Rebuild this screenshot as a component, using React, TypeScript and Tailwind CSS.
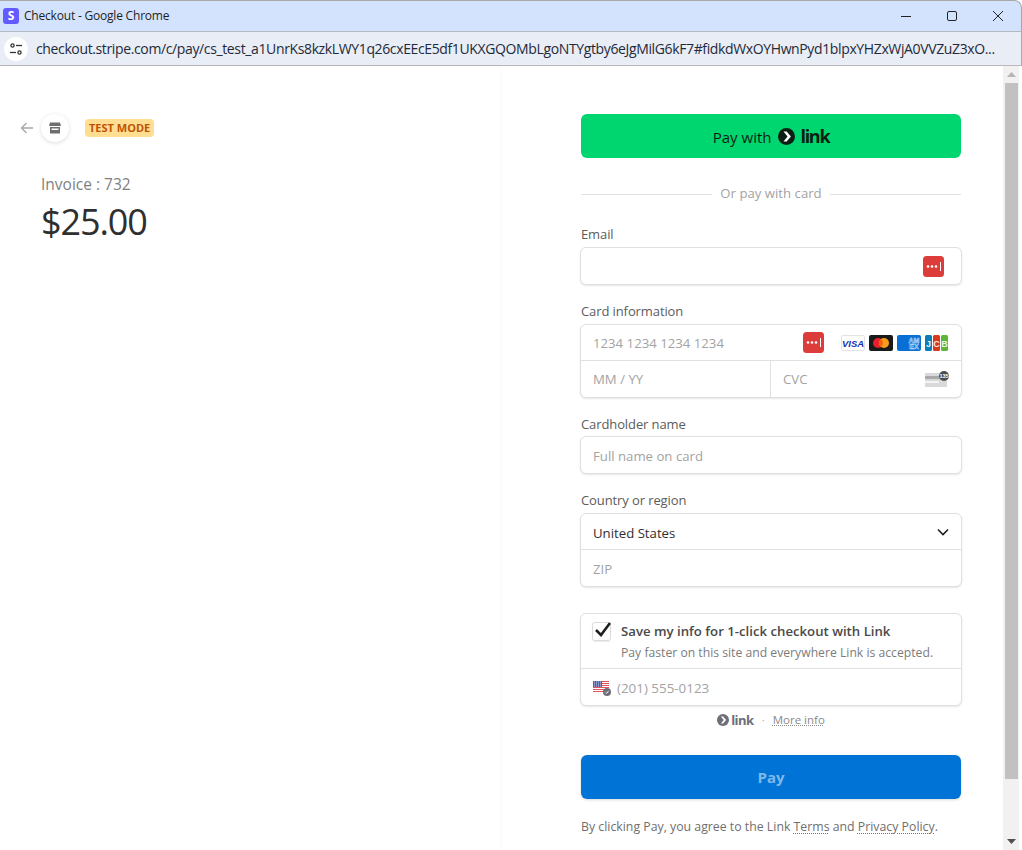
import React from "react";

const sans = { fontFamily: '"Open Sans", "Noto Sans", sans-serif' };

function LinkMark({ size, bg, fg }: { size: number; bg: string; fg: string }) {
  return (
    <svg width={size} height={size} viewBox="0 0 20 20" className="shrink-0">
      <circle cx="10" cy="10" r="10" fill={bg} />
      <path d="M6.500 4.200 L10.200 4.200 L15.200 10 L10.200 15.800 L6.500 15.800 L11.200 10 Z" fill={fg} />
    </svg>
  );
}

function DotsIcon() {
  return (
    <svg width="21" height="21" viewBox="0 0 21 21" className="shrink-0">
      <rect width="21" height="21" rx="3.5" fill="#dc3d3a" />
      <circle cx="5" cy="10.5" r="1.3" fill="#fff" />
      <circle cx="9" cy="10.5" r="1.3" fill="#fff" />
      <circle cx="13" cy="10.5" r="1.3" fill="#fff" />
      <rect x="17" y="6" width="1" height="9" fill="#fff" />
    </svg>
  );
}

function Visa() {
  return (
    <svg width="24" height="16" viewBox="0 0 24 16" className="shrink-0">
      <rect x="0.5" y="0.5" width="23" height="15" rx="1.5" fill="#fff" stroke="#e3e3e3" />
      <text x="12" y="11.500" textAnchor="middle" fontSize="9.500" fontWeight="800" fontStyle="italic" fill="#1a2fb0" fontFamily="Liberation Sans, sans-serif">VISA</text>
    </svg>
  );
}

function Master() {
  return (
    <svg width="24" height="16" viewBox="0 0 24 16" className="shrink-0">
      <rect width="24" height="16" rx="2" fill="#1a1a1a" />
      <circle cx="9" cy="8" r="5" fill="#e8202a" />
      <circle cx="15" cy="8" r="5" fill="#f79e1b" />
      <path d="M12 4 A5 5 0 0 1 12 12 A5 5 0 0 1 12 4Z" fill="#f5620f" />
    </svg>
  );
}

function Amex() {
  return (
    <svg width="24" height="16" viewBox="0 0 24 16" className="shrink-0">
      <rect width="24" height="16" rx="2" fill="#0a6fd4" />
      <text x="17" y="7.500" textAnchor="middle" fontSize="7" fontWeight="700" fill="#0a6fd4" stroke="#d8e9fb" strokeWidth="0.45" fontFamily="Liberation Sans, sans-serif">AM</text>
      <text x="17" y="14" textAnchor="middle" fontSize="7" fontWeight="700" fill="#0a6fd4" stroke="#d8e9fb" strokeWidth="0.45" fontFamily="Liberation Sans, sans-serif">EX</text>
    </svg>
  );
}

function Jcb() {
  return (
    <svg width="23" height="16" viewBox="0 0 23 16" className="shrink-0">
      <rect x="0" width="7" height="16" rx="1.500" fill="#0b7cb5" />
      <rect x="8" width="7" height="16" rx="1.500" fill="#d83a1e" />
      <rect x="16" width="7" height="16" rx="1.500" fill="#5fb43c" />
      <text x="3.500" y="11.500" textAnchor="middle" fontSize="9" fontWeight="700" fill="#e6f2f8" fontFamily="Liberation Sans, sans-serif">J</text>
      <text x="11.500" y="11.500" textAnchor="middle" fontSize="9" fontWeight="700" fill="#f8e6e0" fontFamily="Liberation Sans, sans-serif">C</text>
      <text x="19.500" y="11.500" textAnchor="middle" fontSize="9" fontWeight="700" fill="#e8f5e2" fontFamily="Liberation Sans, sans-serif">B</text>
    </svg>
  );
}

function CvcIcon() {
  return (
    <svg width="24" height="16" viewBox="0 0 24 16" className="shrink-0">
      <rect x="0" y="2" width="22" height="14" rx="1" fill="#d9d9d9" />
      <rect x="0" y="5" width="22" height="3" fill="#a9a9a9" />
      <rect x="0" y="10" width="14" height="2" fill="#f4f4f4" />
      <circle cx="19" cy="5" r="5" fill="#4d4d4d" />
      <text x="19" y="7" textAnchor="middle" fontSize="5.500" fontWeight="700" fill="#fff" fontFamily="Liberation Sans, sans-serif">135</text>
    </svg>
  );
}

function Flag() {
  return (
    <div className="relative w-[17px] h-[13px] shrink-0">
      <svg width="16" height="11" viewBox="0 0 16 11">
        <rect width="16" height="11" fill="#fff" />
        {[0, 2, 4, 6, 8, 10].map((y) => (
          <rect key={y} y={y} width="16" height="1" fill="#e0535a" />
        ))}
        <rect width="9" height="6" fill="#4f5ea8" />
        {[1, 3, 5, 7].map((x) =>
          [1, 3, 5].map((y) => <rect key={`${x}-${y}`} x={x} y={y - 0.5} width="1" height="1" fill="#c9cfe8" />),
        )}
      </svg>
      <svg width="8" height="8" viewBox="0 0 8 8" className="absolute right-[-1px] bottom-[-2px]">
        <circle cx="4" cy="4" r="4" fill="#6d6e78" />
        <path d="M2.500 4.200 L3.700 5.300 L5.600 2.900" fill="none" stroke="#fff" strokeWidth="0.9" />
      </svg>
    </div>
  );
}

function Label({ children, className = "" }: { children: React.ReactNode; className?: string }) {
  return <div className={`text-[13px] leading-[18px] font-medium text-[#5c5c5c] tracking-[-0.1px] ${className}`}>{children}</div>;
}

const boxClass =
  "mx-[-1px] border border-[#e0e0e0] rounded-md bg-white shadow-[0_1px_2px_rgba(0,0,0,0.1)] overflow-hidden";

export default function App() {
  return (
    <div className="w-[1022px] h-[850px] overflow-hidden bg-white flex flex-col relative" style={sans}>
      {/* Title bar */}
      <div className="h-[32px] shrink-0 bg-[#d3e3fd] border-t border-r border-[#a8a8a8] border-b-[#b4b8bf] border-b rounded-tr-[8px] flex items-center">
        <div className="ml-[3px] w-[16px] h-[16px] rounded-[3px] bg-[#635bff] flex items-center justify-center text-white text-[12px] font-bold leading-none">
          S
        </div>
        <div className="ml-[5px] text-[12px] tracking-[-0.2px] text-[#1f1f1f]">Checkout - Google Chrome</div>
        <div className="flex-1" />
        <div className="flex items-center mr-[17px]">
          <svg width="12" height="12" viewBox="0 0 12 12" className="mr-[34px]">
            <path d="M1 6.500 H11" stroke="#222" strokeWidth="1" />
          </svg>
          <svg width="12" height="12" viewBox="0 0 12 12" className="mr-[34px]">
            <rect x="1.500" y="1.500" width="9" height="9" rx="1.500" fill="none" stroke="#222" strokeWidth="1" />
          </svg>
          <svg width="12" height="12" viewBox="0 0 12 12">
            <path d="M1 1 L11 11 M11 1 L1 11" stroke="#222" strokeWidth="1" />
          </svg>
        </div>
      </div>
      {/* Address bar */}
      <div className="h-[34px] shrink-0 bg-[#e9edf6] border-r border-[#a8a8a8] border-b border-b-[#b9b9b9] flex items-center">
        <div className="ml-[4px] w-[24px] h-[24px] rounded-full bg-white flex items-center justify-center">
          <svg width="14" height="14" viewBox="0 0 14 14" fill="none" stroke="#333" strokeWidth="1.300">
            <circle cx="3.500" cy="3.500" r="1.600" />
            <path d="M7 3.500 H13" />
            <circle cx="10.500" cy="10.500" r="1.600" />
            <path d="M1 10.500 H7" />
          </svg>
        </div>
        <div className="ml-[8px] text-[14px] text-[#1f2a3a] whitespace-nowrap tracking-[-0.37px]">
          checkout.stripe.com/c/pay/cs_test_a1UnrKs8kzkLWY1q26cxEEcE5df1UKXGQOMbLgoNTYgtby6eJgMilG6kF7#fidkdWxOYHwnPyd1blpxYHZxWjA0VVZuZ3xO...
        </div>
      </div>
      {/* Page */}
      <div className="flex-1 flex min-h-0">
        {/* Left */}
        <div className="w-[500px] shrink-0 shadow-[1px_0_5px_rgba(0,0,0,0.025)] pt-[48px]">
          <div className="flex items-center pl-[20px]">
            <svg width="14" height="14" viewBox="0 0 14 14" fill="none" stroke="#a8a8a8" strokeWidth="1.300">
              <path d="M13 7 H1.500 M6.500 2 L1.500 7 L6.500 12" />
            </svg>
            <div className="ml-[7px] w-[28px] h-[28px] rounded-full bg-white shadow-[0_1px_4px_rgba(0,0,0,0.14)] flex items-center justify-center">
              <svg width="12" height="12" viewBox="0 0 12 12">
                <path d="M1 0.500 H11 L12 4 H0 Z" fill="#6e6e6e" />
                <path d="M1 5 H11 V11.500 H1 Z M2.500 6.500 V8 H9.500 V6.500 Z" fill="#6e6e6e" fillRule="evenodd" />
              </svg>
            </div>
            <div className="ml-[16px] h-[18px] px-[4px] pb-[1px] rounded-[4px] bg-[#ffde92] text-[#bb5504] text-[11px] font-bold flex items-center leading-none">
              TEST MODE
            </div>
          </div>
          <div className="ml-[41px] mt-[32px] text-[15.5px] leading-[20px] font-medium text-[#7f7f7f]">Invoice : 732</div>
          <div className="ml-[41px] mt-[6px] text-[36px] leading-[44px] text-[#2f2f2f] tracking-[-1.1px]">$25.00</div>
        </div>
        {/* Right */}
        <div className="flex-1 min-w-0 pt-[48px] pl-[81px]">
          <div className="w-[380px]">
            <div className="h-[44px] rounded-md bg-[#00d66f] flex items-center justify-center text-[#0a1f14]">
              <span className="text-[15px] pt-[2px]">Pay with</span>
              <span className="ml-[7px]"><LinkMark size={17} bg="#0a1f14" fg="#fff" /></span>
              <span className="ml-[5px] text-[18px] font-bold leading-none tracking-[-1.300px]">link</span>
            </div>
            <div className="mt-[26px] h-[20px] flex items-center">
              <div className="flex-1 h-px bg-[#e2e2e2]" />
              <div className="px-[8px] text-[13.2px] text-[#a3a3a3]">Or pay with card</div>
              <div className="flex-1 h-px bg-[#e2e2e2]" />
            </div>

            <Label className="mt-[21px]">Email</Label>
            <div className={`${boxClass} mt-[4px] h-[38px] flex items-center justify-end pr-[17px]`}>
              <DotsIcon />
            </div>

            <Label className="mt-[17px]">Card information</Label>
            <div className={`${boxClass} mt-[4px]`}>
              <div className="h-[36px] border-b border-[#e0e0e0] flex items-center pl-[12px] pr-[13px]">
                <span className="text-[13.2px] pt-[2px] text-[#a3a3a3] flex-1">1234 1234 1234 1234</span>
                <DotsIcon />
                <div className="ml-[17px] flex items-center gap-[4px]">
                  <Visa />
                  <Master />
                  <Amex />
                  <Jcb />
                </div>
              </div>
              <div className="h-[36px] flex">
                <div className="w-[190px] border-r border-[#e0e0e0] flex items-center pl-[12px] text-[13.2px] text-[#a3a3a3]">
                  <span className="pt-[2px]">MM / YY</span>
                </div>
                <div className="flex-1 flex items-center justify-between pl-[12px] pr-[12px] text-[13.2px] text-[#a3a3a3]">
                  <span className="pt-[2px]">CVC</span>
                  <CvcIcon />
                </div>
              </div>
            </div>

            <Label className="mt-[17px]">Cardholder name</Label>
            <div className={`${boxClass} mt-[3px] h-[38px] flex items-center pl-[12px] text-[13.2px] text-[#a3a3a3]`}>
              <span className="pt-[4px]">Full name on card</span>
            </div>

            <Label className="mt-[17px]">Country or region</Label>
            <div className={`${boxClass} mt-[4px]`}>
              <div className="h-[36px] border-b border-[#e0e0e0] flex items-center justify-between pl-[12px] pr-[12px] text-[13.2px] text-[#2f2f2f]">
                <span className="pt-[4px]">United States</span>
                <svg width="12" height="8" viewBox="0 0 12 8" fill="none" stroke="#1f1f1f" strokeWidth="1.600">
                  <path d="M1 1.500 L6 6.500 L11 1.500" />
                </svg>
              </div>
              <div className="h-[36px] flex items-center pl-[12px] text-[13.2px] text-[#a3a3a3]">
                <span className="pt-[4px]">ZIP</span>
              </div>
            </div>

            <div className={`${boxClass} mt-[26px]`}>
              <div className="h-[55px] border-b border-[#e0e0e0] flex">
                <div className="relative ml-[11px] mt-[8px] w-[19px] h-[19px] rounded-[3px] border border-[#dcdcdc] shadow-[0_1px_1px_rgba(0,0,0,0.08)]">
                  <svg width="20" height="20" viewBox="0 0 20 20" className="absolute left-0 top-[-3px]">
                    <path d="M3 10 L8 15 L17 3" fill="none" stroke="#1f1f1f" strokeWidth="2.600" />
                  </svg>
                </div>
                <div className="ml-[10px] pt-[8px]">
                  <div className="text-[13.2px] leading-[18px] font-semibold text-[#4a4a4a]">Save my info for 1-click checkout with Link</div>
                  <div className="mt-[5px] text-[12.2px] leading-[16px] text-[#7c7c7c] whitespace-nowrap">Pay faster on this site and everywhere Link is accepted.</div>
                </div>
              </div>
              <div className="h-[36px] flex items-center pl-[12px] text-[13.4px] text-[#a3a3a3]">
                <Flag />
                <span className="ml-[7px] pt-[2px]">(201) 555-0123</span>
              </div>
            </div>

            <div className="mt-[5px] h-[18px] flex items-center justify-center text-[11.5px] text-[#8a8a8a]">
              <LinkMark size={12} bg="#6d6e78" fg="#fff" />
              <span className="ml-[2px] text-[13px] font-bold leading-none text-[#6d6e78] tracking-[-0.5px]">link</span>
              <span className="mx-[8px] text-[#b5b5b5]">·</span>
              <span className="underline decoration-dotted underline-offset-1">More info</span>
            </div>

            <div className="mt-[26px] h-[44px] rounded-md bg-[#0073d6] shadow-[0_1px_3px_rgba(0,0,0,0.15)] flex items-center justify-center text-[15px] font-bold text-[#7fb9ea]">
              Pay
            </div>

            <div className="mt-[19px] text-[12.3px] leading-[18px] text-[#6f6f6f] whitespace-nowrap">
              By clicking Pay, you agree to the Link{" "}
              <span className="underline decoration-dotted underline-offset-2">Terms</span> and{" "}
              <span className="underline decoration-dotted underline-offset-2">Privacy Policy</span>.
            </div>
          </div>
        </div>
        {/* Scrollbar */}
        <div className="w-[16px] shrink-0 mr-[3px] bg-[#f1f1f1] flex flex-col items-center">
          <div className="h-[17px] flex items-center justify-center">
            <svg width="9" height="5" viewBox="0 0 9 5"><path d="M4.500 0 L9 5 H0 Z" fill="#b5b5b5" /></svg>
          </div>
          <div className="w-[13px] h-[696px] bg-[#c1c1c1]" />
          <div className="flex-1" />
          <div className="h-[17px] flex items-center justify-center">
            <svg width="9" height="5" viewBox="0 0 9 5"><path d="M0 0 H9 L4.500 5 Z" fill="#505050" /></svg>
          </div>
        </div>
      </div>
    </div>
  );
}
